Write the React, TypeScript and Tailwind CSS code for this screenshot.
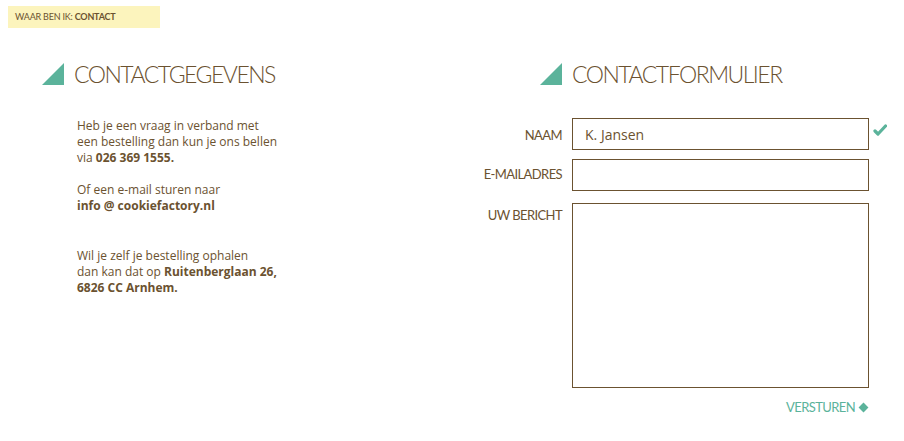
import React from "react";

const heading = "font-['Lato',sans-serif] font-light text-[23px] leading-none tracking-[-1.5px] text-[#6b5230]";
const label = "text-right text-[13px] tracking-[-0.6px]";

function Triangle() {
  return (
    <svg width="22" height="22" viewBox="0 0 22 22" className="shrink-0">
      <polygon points="22,0 22,22 0,22" fill="#5bb39b" />
    </svg>
  );
}

function Check() {
  return (
    <svg width="14" height="12" viewBox="0 0 14 12" className="mt-[6px] ml-[-6px]">
      <path d="M2 7 L5 10 L12.5 2" fill="none" stroke="#5bb39b" strokeWidth="3.2" strokeLinecap="round" strokeLinejoin="round" />
    </svg>
  );
}

export default function App() {
  return (
    <div className="w-[904px] h-[441px] bg-white text-[#6b5230] font-['Open_Sans',sans-serif] relative">
      <div className="pt-[6px] pl-[8px]">
        <div className="w-[152px] h-[22px] bg-[#fcf4bd] flex items-center pl-[7px] font-['Lato',sans-serif] text-[9px] tracking-[-0.2px]">
          WAAR BEN IK:&nbsp;<span className="font-bold">CONTACT</span>
        </div>
      </div>

      <div className="flex mt-[35px]">
        {/* left column */}
        <div className="w-[470px] pl-[42px]">
          <div className="flex items-end gap-[10px] h-[22px]">
            <Triangle />
            <h2 className={heading + " translate-y-[1px]"}>CONTACTGEGEVENS</h2>
          </div>
          <div className="pl-[35px] mt-[33px] text-[12px] leading-[16px]">
            <p>
              Heb je een vraag in verband met
              <br />
              een bestelling dan kun je ons bellen
              <br />
              via <b>026 369 1555.</b>
            </p>
            <p className="mt-[16px]">
              Of een e-mail sturen naar
              <br />
              <b>info @ cookiefactory.nl</b>
            </p>
            <p className="mt-[34px]">
              Wil je zelf je bestelling ophalen
              <br />
              dan kan dat op <b>Ruitenberglaan 26,</b>
              <br />
              <b>6826 CC Arnhem.</b>
            </p>
          </div>
        </div>

        {/* right column */}
        <div className="flex-1">
          <div className="flex items-end gap-[10px] h-[22px] pl-[70px]">
            <Triangle />
            <h2 className={heading + " translate-y-[1px]"}>CONTACTFORMULIER</h2>
          </div>
          <form className="mt-[33px] grid grid-cols-[92px_297px_20px] gap-x-[10px] gap-y-[9px] font-['Lato',sans-serif]">
            <label className={label + " self-center pt-[4px]"}>NAAM</label>
            <div className="h-[32px] border border-[#6b5230] flex items-center px-[12px] font-['Open_Sans',sans-serif] text-[14px]">
              K. Jansen
            </div>
            <Check />

            <label className={label + " self-center"}>E-MAILADRES</label>
            <div className="h-[32px] border border-[#6b5230]" />
            <div />

            <label className={label + " pt-[3px] mt-[3px]"}>UW BERICHT</label>
            <div className="h-[185px] border border-[#6b5230] mt-[3px]" />
            <div />

            <div />
            <div className="flex justify-end items-center gap-[3px] mt-[1px] text-[13px] tracking-[-0.6px] text-[#5bb39b]">
              VERSTUREN
              <span className="inline-block w-[7px] h-[7px] bg-[#5bb39b] rotate-45 mx-[2px]" />
            </div>
            <div />
          </form>
        </div>
      </div>
    </div>
  );
}
